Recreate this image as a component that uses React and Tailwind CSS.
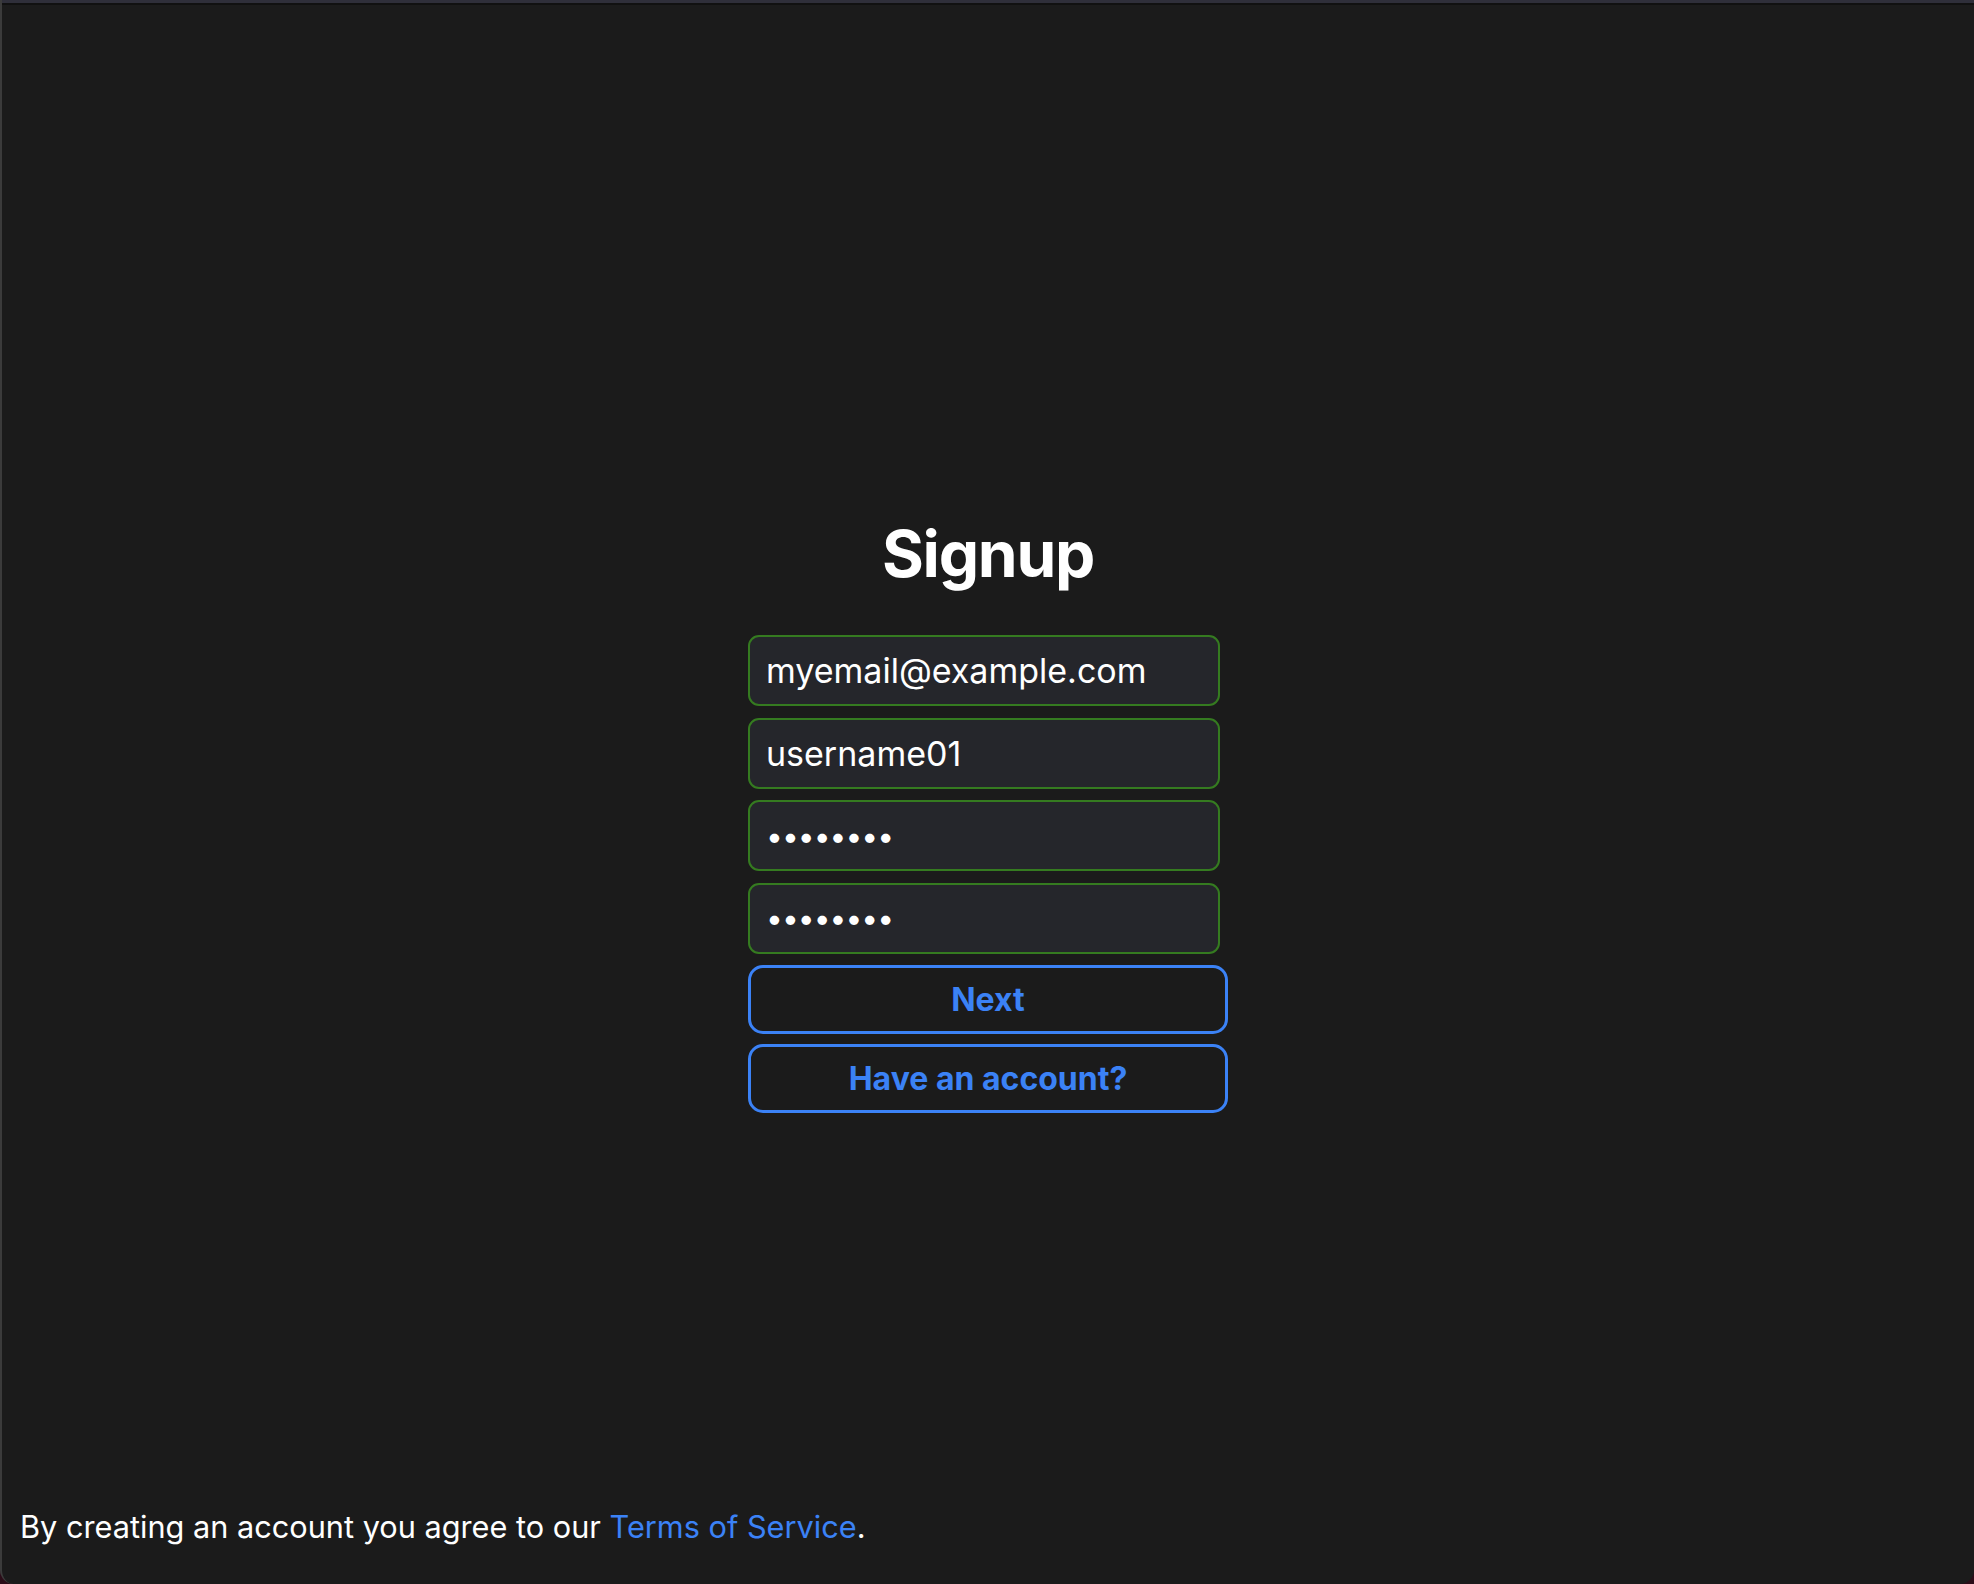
import React, { useState } from "react";

export default function App() {
  const [form, setForm] = useState({
    email: "myemail@example.com",
    username: "username01",
    password: "12345678",
    confirm: "12345678",
  });

  const handleChange = (e) => {
    setForm({ ...form, [e.target.name]: e.target.value });
  };

  const inputClass =
    "w-[472px] h-[71px] px-4 rounded-[11px] border-2 border-[#357b20] bg-[#25262b] text-white outline-none";

  return (
    <div className="h-screen w-full bg-[#2b0c18] font-['Inter',sans-serif]">
      <div className="h-full flex flex-col bg-[#1b1b1b] rounded-b-[14px] border-l-2 border-[#3b3b3b] overflow-hidden">
        <div className="h-[3px] bg-[#2f2f3a]" />
        <div className="h-[2px] bg-[#111111]" />

        <main className="flex-1 flex flex-col items-center pt-[517px]">
          <h1 className="text-[64px] leading-[64px] font-bold text-white tracking-[-0.02em]">
            Signup
          </h1>
          <form
            className="mt-[49px] flex flex-col items-start"
            onSubmit={(e) => e.preventDefault()}
          >
            <input
              type="email"
              name="email"
              className={`${inputClass} text-[34px]`}
              value={form.email}
              onChange={handleChange}
            />
            <input
              type="text"
              name="username"
              className={`${inputClass} text-[34px] mt-[11.5px]`}
              value={form.username}
              onChange={handleChange}
            />
            <input
              type="password"
              name="password"
              className={`${inputClass} text-[30px] mt-[11.5px] tracking-[-1px]`}
              value={form.password}
              onChange={handleChange}
            />
            <input
              type="password"
              name="confirm"
              className={`${inputClass} text-[30px] mt-[11.5px] tracking-[-1px]`}
              value={form.confirm}
              onChange={handleChange}
            />
            <button
              type="submit"
              className="mt-[11.5px] w-[480px] h-[69px] rounded-[15px] border-[3px] border-[#3b82f6] text-[#3b82f6] text-[32px] font-bold"
            >
              Next
            </button>
            <button
              type="button"
              className="mt-[10px] w-[480px] h-[69px] rounded-[15px] border-[3px] border-[#3b82f6] text-[#3b82f6] text-[32px] font-bold"
            >
              Have an account?
            </button>
          </form>
        </main>

        <footer className="pl-[18px] pb-[35px] text-[30.7px] leading-[45px] text-white">
          By creating an account you agree to our{" "}
          <a href="#" className="text-[#3b82f6]">
            Terms of Service
          </a>
          .
        </footer>
      </div>
    </div>
  );
}
